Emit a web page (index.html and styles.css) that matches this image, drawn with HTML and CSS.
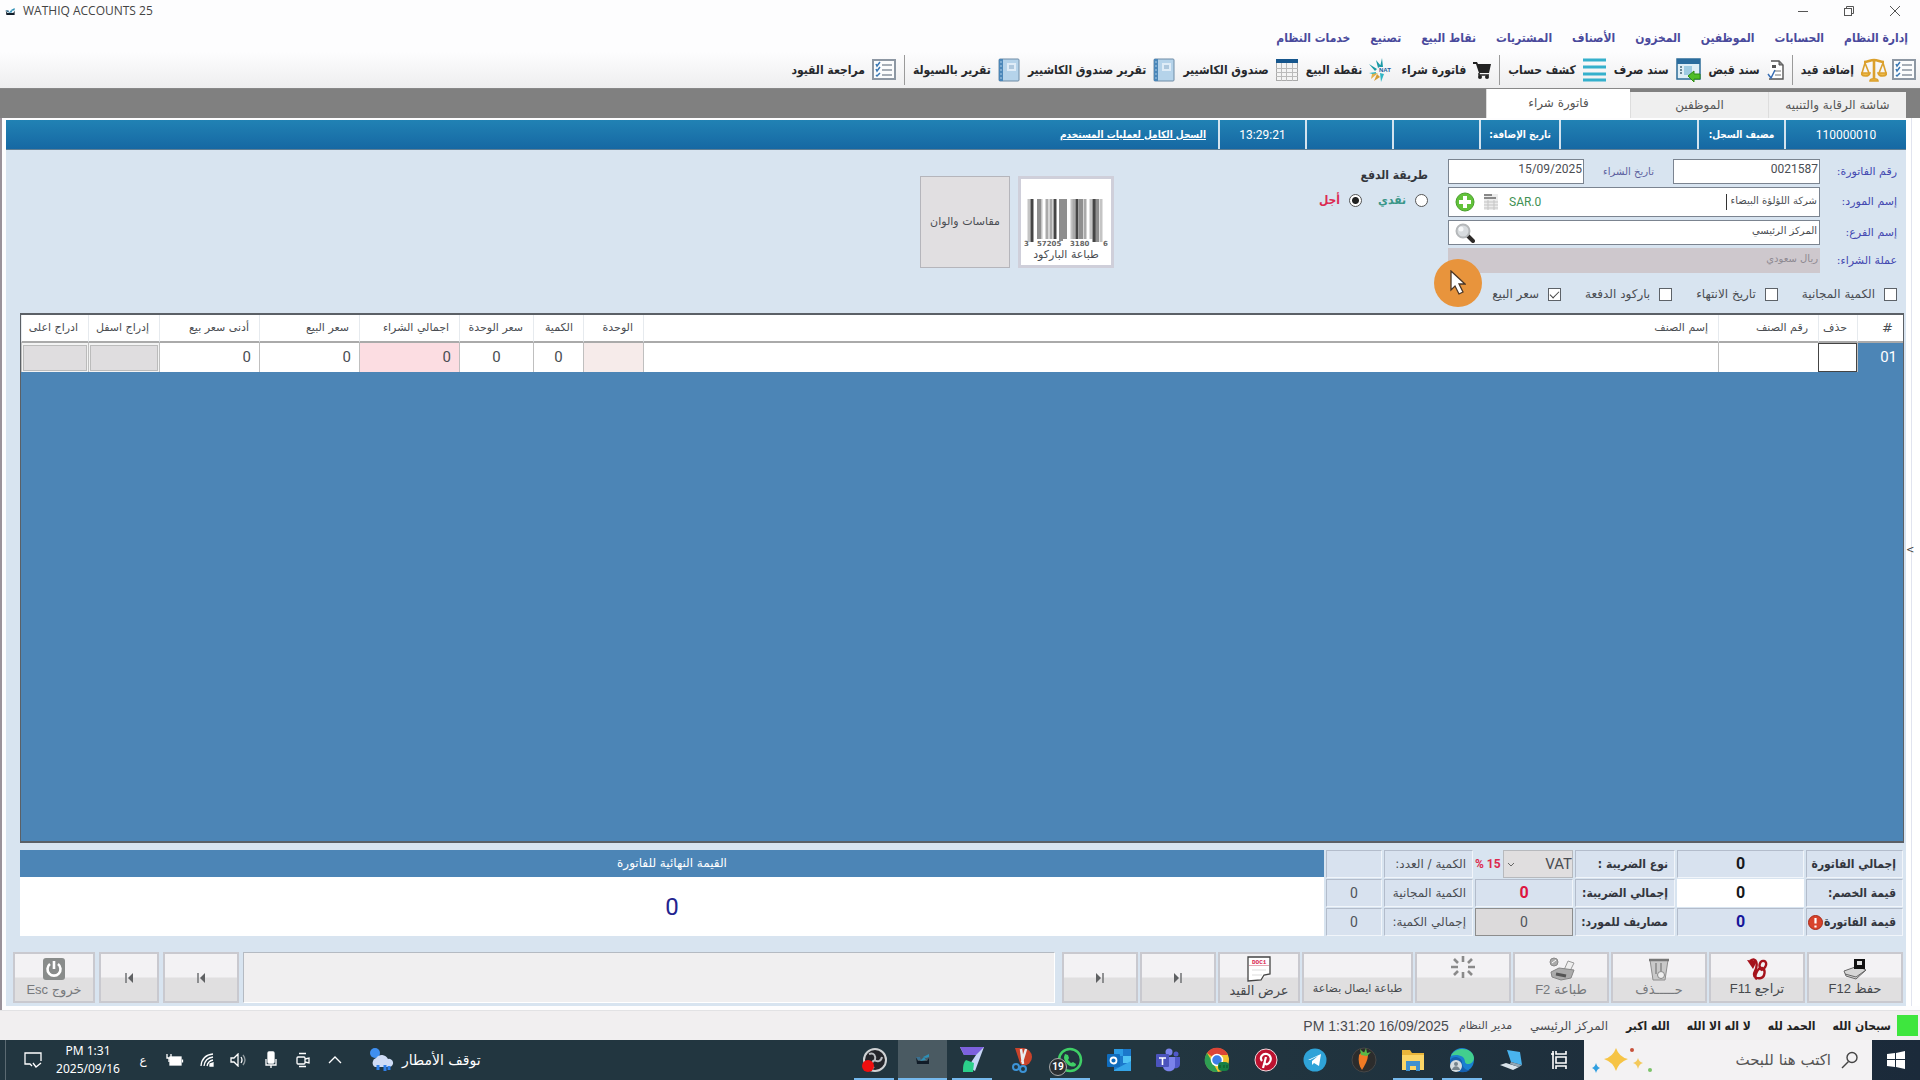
FILE: index.html
```html
<!DOCTYPE html>
<html lang="ar" dir="rtl">
<head>
<meta charset="utf-8">
<title>WATHIQ ACCOUNTS 25</title>
<link rel="stylesheet" href="styles.css">
</head>
<body>
<svg class="defs" width="0" height="0" aria-hidden="true">
  <symbol id="i-list" viewBox="0 0 24 22"><rect x="1" y="1" width="22" height="19" fill="#fbfcfd" stroke="#8d97a3" stroke-width="2"/><path d="M4 5l1 2 3-4M4 10l1 2 3-4M4 16l1 1 3-3" fill="none" stroke="#3b78b4" stroke-width="1.5"/><path d="M10 6h10M10 11h10M10 16h10" stroke="#8a94a0" stroke-width="1.4"/></symbol>
  <symbol id="i-book" viewBox="0 0 22 24"><rect x="1" y="1" width="20" height="22" rx="1" fill="#b5d3ea" stroke="#6f8ca6"/><rect x="1" y="1" width="4" height="22" fill="#4b87b9"/><rect x="9" y="5" width="9" height="8" fill="#dfecf7"/><path d="M11 8h5M11 10h5" stroke="#7fa4c4"/><path d="M2 4h2M2 8h2M2 12h2M2 16h2M2 20h2" stroke="#a9cbe6"/></symbol>
  <symbol id="i-app" viewBox="0 0 16 12"><path d="M1 4l2 4h9l2-3v6H2z" fill="#111c28"/><path d="M5 8l4-4 2 3zM8 4l6-3v3l-3 1z" fill="#2e8fb5"/><path d="M1 4h4l1 3H3z" fill="#3b6f8f"/></symbol>
  <symbol id="i-end" viewBox="0 0 10 12"><path d="M1 1l5 5-5 5z" fill="#5f6163"/><path d="M8 1v10" stroke="#77797b" stroke-width="1.6"/></symbol>
  <symbol id="i-first" viewBox="0 0 10 12"><path d="M9 1L4 6l5 5z" fill="#5f6163"/><path d="M2 1v10" stroke="#77797b" stroke-width="1.6"/></symbol>
</svg>

<header class="titlebar" dir="ltr">
  <svg class="app-icon" width="11" height="9"><use href="#i-app"/></svg>
  <h1>WATHIQ ACCOUNTS 25</h1>
  <div class="window-buttons">
    <button aria-label="تصغير"><svg width="12" height="12"><path d="M1 6.5h10" stroke="#555"/></svg></button>
    <button aria-label="استعادة"><svg width="12" height="12" fill="none" stroke="#555"><rect x="1.5" y="3.5" width="7" height="7"/><path d="M3.500 3.500v-2h7v7h-2"/></svg></button>
    <button aria-label="إغلاق"><svg width="12" height="12"><path d="M1 1l10 10M11 1L1 11" stroke="#555"/></svg></button>
  </div>
</header>

<nav class="menu">
  <a href="#">إدارة النظام</a><a href="#">الحسابات</a><a href="#">الموظفين</a><a href="#">المخزون</a><a href="#">الأصناف</a><a href="#">المشتريات</a><a href="#">نقاط البيع</a><a href="#">تصنيع</a><a href="#">خدمات النظام</a>
</nav>

<div class="toolbar">
  <button class="icon-only" aria-label="القائمة"><svg width="24" height="22"><use href="#i-list"/></svg></button>
  <button><svg width="26" height="26" viewBox="0 0 26 26" fill="none" stroke="#dba02c" stroke-width="1.600"><path d="M13 2v20M3 5c4 0 6-2 10-2s6 2 10 2" stroke-width="2.600"/><path d="M4 6L1 16M4 6l4 10M22 6l-4 10M22 6l3 10"/><path d="M0 16h9c-1 4-8 4-9 0zM17 16h9c-1 4-8 4-9 0zM9 24c0-3 8-3 8 0z" fill="#eebc4c"/></svg>إضافة قيد</button>
  <i class="sep"></i>
  <button><svg width="17" height="20" viewBox="0 0 17 20"><path d="M4 1h8l4 4v14H2" fill="#fff" stroke="#555" stroke-width="1.400"/><path d="M12 1v4h4" fill="#888" stroke="#555"/><path d="M5 5h4v3H5z" fill="#555"/><path d="M1 14l3 4 4-8" fill="none" stroke="#3a6fb5" stroke-width="1.500"/><path d="M8 11h6M8 15h6" stroke="#777"/></svg>سند قبض</button>
  <button><svg width="25" height="24" viewBox="0 0 25 24"><rect x="1" y="1" width="23" height="20" fill="#dfeef6" stroke="#2d6c98" stroke-width="1.500"/><rect x="1" y="1" width="23" height="5" fill="#2a6c9e"/><path d="M4 9h2M4 12h2M4 15h2" stroke="#467" stroke-width="1.500"/><path d="M8 8h8v9H8z" fill="#9ecbe2"/><path d="M12 18l6-5v3h6v5h-6v3z" fill="#4fbd28" stroke="#2f8c14"/></svg>سند صرف</button>
  <button><svg width="23" height="24" viewBox="0 0 23 24"><path d="M0 2h23M0 9h23M0 16h23M0 22h23" stroke="#35b0cc" stroke-width="3"/></svg>كشف حساب</button>
  <i class="sep"></i>
  <button><svg width="18" height="18" viewBox="0 0 18 18"><path d="M0 1h4l1 2h13l-2 9H6L3 3H0z" fill="#222"/><path d="M6 12v2h10" fill="none" stroke="#222" stroke-width="1.500"/><circle cx="7" cy="16" r="2" fill="#222"/><circle cx="14" cy="16" r="2" fill="#222"/></svg>فاتورة شراء</button>
  <button><svg width="24" height="24" viewBox="0 0 24 24"><path d="M9 10L7 2l5 6zM8 11L0 6l6 7zM11 9l2-9 1 9z" fill="#1c9aa6"/><path d="M7 14l-7 1 7 2zM11 15l1 9 3-8z" fill="#2fb6c4"/><path d="M9 15l-7 6 1-5z" fill="#e3b04a"/><path d="M8 16l-3 7 6-4z" fill="#d59c34"/><text x="10" y="14" class="nat">NAT</text></svg>نقطة البيع</button>
  <button><svg width="22" height="22" viewBox="0 0 22 22"><rect x=".5" y=".5" width="21" height="21" fill="#f4f4f4" stroke="#aaa"/><rect width="22" height="4" fill="#16568d"/><path d="M0 9.500h22M0 13.500h22M0 17.500h22M5.500 4v18M10.500 4v18M16.500 4v18" stroke="#bbb"/></svg>صندوق الكاشيير</button>
  <button><svg width="22" height="24"><use href="#i-book"/></svg>تقرير صندوق الكاشيير</button>
  <button><svg width="22" height="24"><use href="#i-book"/></svg>تقرير بالسيولة</button>
  <i class="sep"></i>
  <button><svg width="24" height="22"><use href="#i-list"/></svg>مراجعة القيود</button>
</div>

<div class="tabs">
  <button>شاشة الرقابة والتنبيه</button>
  <button>الموظفين</button>
  <button class="active">فاتورة شراء</button>
</div>

<div class="workspace">
<aside class="rail"><button aria-label="طي">&gt;</button></aside>
<main class="panel">
  <div class="record-bar">
    <span class="w-l num">110000010</span><span class="w-m">مضيف السجل:</span><span class="w-xl"></span><span class="w-s">تاريخ الإضافة:</span><span class="w-m"></span><span class="w-m"></span><span class="w-m num">13:29:21</span>
    <a href="#">السجل الكامل لعمليات المستخدم</a>
  </div>

  <section class="form">
    <div class="details">
      <div class="fields">
        <label for="inv">رقم الفاتورة:</label>
        <div class="pair">
          <input id="inv" class="num" value="0021587">
          <label for="date">تاريخ الشراء</label>
          <input id="date" class="num" value="15/09/2025">
        </div>
        <label for="supplier">إسم المورد:</label>
        <div class="box tall">
          <input id="supplier" value="شركة اللؤلؤة البيضاء"><i class="caret"></i>
          <span class="balance" dir="ltr">SAR.0</span>
          <svg width="16" height="18" viewBox="0 0 16 18"><rect x="1" y="1" width="14" height="16" fill="#ececec"/><path d="M1 2h8M1 5h12" stroke="#888" stroke-width="2"/><path d="M1 9h14M1 12h14M1 15h14M5 7v10M11 7v10" stroke="#c5c5c5"/></svg>
          <svg width="20" height="20" viewBox="0 0 20 20"><circle cx="10" cy="10" r="9" fill="#62c23a" stroke="#49a02c"/><path d="M10 4v12M4 10h12" stroke="#fff" stroke-width="4"/></svg>
        </div>
        <label for="branch">إسم الفرع:</label>
        <div class="box">
          <input id="branch" value="المركز الرئيسي">
          <svg width="20" height="20" viewBox="0 0 20 20"><path d="M12 12l6 6" stroke="#2d2a28" stroke-width="4" stroke-linecap="round"/><circle cx="8" cy="8" r="6.500" fill="#d8dcdf" stroke="#b5b8ba" stroke-width="2"/><circle cx="6" cy="6" r="2.500" fill="#f6f8f9"/></svg>
        </div>
        <label for="currency">عملة الشراء:</label>
        <div class="box off">
          <input id="currency" value="ريال سعودي" disabled>
          <span class="pointer"><svg width="16" height="26" viewBox="0 0 16 26"><path d="M1 1v19l4-4 4 8 4-2-4-8h6z" fill="#fff" stroke="#4b3626" stroke-width="1.300"/></svg></span>
        </div>
      </div>
      <div class="options">
        <label><input type="checkbox">الكمية المجانية</label>
        <label><input type="checkbox">تاريخ الانتهاء</label>
        <label><input type="checkbox">باركود الدفعة</label>
        <label><input type="checkbox" checked>سعر البيع</label>
      </div>
    </div>
    <fieldset class="payment">
      <legend>طريقة الدفع</legend>
      <label class="cash"><input type="radio" name="pay">نقدي</label>
      <label class="credit"><input type="radio" name="pay" checked>أجل</label>
    </fieldset>
    <div class="big-buttons">
      <button class="barcode">
        <svg width="84" height="50" viewBox="0 0 84 50"><path d="M5 2v43M17 2v40M48 2v40M67 2v40M77 2v43" stroke="#c4c4c4" stroke-width="3"/><path d="M15 2v40M41 2v40M57 2v40M37 2v42M73 2v43" stroke="#8f8f8f" stroke-width="4"/><path d="M23 2v40M27 2v40M50 2v40M61 2v40" stroke="#aaa" stroke-width="3"/><path d="M8 2v43M31 2v40M53 2v40M70 2v43" stroke="#454545" stroke-width="3"/><g class="digits"><text x="0" y="49">3</text><text x="13" y="49">57205</text><text x="46" y="49">3180</text><text x="79" y="49">6</text></g></svg>
        طباعة الباركود</button>
      <button class="sizes">مقاسات والوان</button>
    </div>
  </section>

  <div class="grid-area">
    <table>
      <colgroup><col class="c-46"><col class="c-39"><col class="c-100"><col><col class="c-60"><col class="c-50"><col class="c-74"><col class="c-100"><col class="c-100"><col class="c-100"><col class="c-71"><col class="c-67"></colgroup>
      <thead><tr><th class="hash">#</th><th>حذف</th><th>رقم الصنف</th><th>إسم الصنف</th><th>الوحدة</th><th>الكمية</th><th>سعر الوحدة</th><th>اجمالي الشراء</th><th>سعر البيع</th><th>أدنى سعر بيع</th><th>إدراج اسفل</th><th>ادراج اعلى</th></tr></thead>
      <tbody><tr><td class="row-no">01</td><td class="focus"></td><td></td><td></td><td class="unit"></td><td class="mid">0</td><td class="mid">0</td><td class="sum">0</td><td>0</td><td>0</td><td class="ins"><button aria-label="إدراج اسفل"></button></td><td class="ins"><button aria-label="ادراج اعلى"></button></td></tr></tbody>
    </table>
  </div>

  <section class="totals">
    <span class="cell strong">إجمالي الفاتورة</span><output class="cell val">0</output>
    <label class="cell strong" for="vat">نوع الضريبة :</label>
    <div class="tax"><span class="select"><select id="vat"><option>VAT</option></select><svg width="8" height="6"><path d="M1 1l3 3 3-3" fill="none" stroke="#666"/></svg></span><b dir="ltr">% 15</b></div>
    <span class="cell">الكمية / العدد:</span><output class="cell qty"></output>
    <label class="cell strong" for="disc">قيمة الخصم:</label><input id="disc" class="cell val white" value="0">
    <span class="cell strong">إجمالي الضريبة:</span><output class="cell val red">0</output>
    <span class="cell">الكمية المجانية</span><output class="cell qty">0</output>
    <span class="cell strong alert">قيمة الفاتورة<svg width="15" height="15" viewBox="0 0 15 15"><circle cx="7.500" cy="7.500" r="7" fill="#d8432c" stroke="#a92a18"/><path d="M7.500 3v5.500M7.500 10.500v2" stroke="#fff" stroke-width="2.200"/></svg></span><output class="cell val navy">0</output>
    <label class="cell strong" for="exp">مصاريف للمورد:</label><input id="exp" class="cell qty expense" value="0">
    <span class="cell">إجمالي الكمية:</span><output class="cell qty">0</output>
    <div class="final"><h2>القيمة النهائية للفاتورة</h2><output>0</output></div>
  </section>

  <section class="actions">
    <button class="w96"><svg width="26" height="22" viewBox="0 0 26 22"><path d="M2 13l14-5 8 4-10 9-10-3z" fill="#d6d6d6" stroke="#666"/><path d="M3 16l11 3 10-7" fill="none" stroke="#666"/><rect x="12" y="1" width="11" height="10" fill="#111"/><path d="M15 3h5v4h-5z" fill="#e3e3e3"/></svg>حفظ F12</button>
    <button class="w96"><svg width="26" height="22" viewBox="0 0 26 22"><path d="M6 3c7-5 8 4 5 10s2 8 6 7 5-9 1-10-9 9-5 11M17 12c-3-4-1-10 3-9s2 8-3 9" fill="none" stroke="#a5121b" stroke-width="2.400"/><path d="M3 2l10 1-4 8z" fill="#a5121b"/></svg>تراجع F11</button>
    <button class="w96 dim"><svg width="22" height="24" viewBox="0 0 22 24"><path d="M2 3h18l-3 20H5z" fill="#c9c9c9" stroke="#8d8d8d"/><path d="M1 3h20" stroke="#777" stroke-width="2.500"/><path d="M8 6v11M13 6v8" stroke="#999" stroke-width="2"/><circle cx="13" cy="18" r="3.500" fill="#eee" stroke="#888"/></svg>حـــــذف</button>
    <button class="w96 dim"><svg width="30" height="24" viewBox="0 0 30 24"><circle cx="8" cy="5" r="4" fill="#aaa" stroke="#888"/><path d="M6 6l4-3" stroke="#fff"/><path d="M18 13l4-9 6 2-4 8z" fill="#eee" stroke="#999"/><path d="M5 15l8-4 15 2-3 8-10 2-9-3z" fill="#ababab" stroke="#858585"/><path d="M10 17l10 2" stroke="#555" stroke-width="3"/></svg>طباعة F2</button>
    <button class="w96 dim top" aria-label="تحديث"><svg width="26" height="22" viewBox="-13 -11 26 22" stroke="#8a8a8a" stroke-width="2.600"><path d="M0-11v6M0 5v6M-12 0h7M5 0h7M-9-8l4 4M5 4l4 4M9-8L5-4M-5 4l-4 4"/></svg></button>
    <button class="w111 low">طباعة ايصال بضاعة</button>
    <button class="w82"><svg width="24" height="26" viewBox="0 0 24 26"><path d="M1 1h22v17l-6 1-3 5-13 1z" fill="#fff" stroke="#444" stroke-width="1.300"/><text x="5" y="8" class="doc">DOC1</text><path d="M2 9.500h20" stroke="#e4a8b4"/><path d="M5 14h14M5 19h10" stroke="#ddd"/></svg>عرض القيد</button>
    <button class="w76" aria-label="التالي"><svg width="10" height="12"><use href="#i-end"/></svg></button>
    <button class="w76" aria-label="الأخير"><svg width="10" height="12"><use href="#i-end"/></svg></button>
    <div class="message"></div>
    <button class="w76" aria-label="السابق"><svg width="10" height="12"><use href="#i-first"/></svg></button>
    <button class="w60" aria-label="الأول"><svg width="10" height="12"><use href="#i-first"/></svg></button>
    <button class="w82 dim"><svg width="24" height="24" viewBox="0 0 24 24"><rect x="1" y="1" width="22" height="22" rx="3" fill="#898c8b"/><path d="M8 7a6.500 6.500 0 1 0 8 0M12 4v8" fill="none" stroke="#fff" stroke-width="2.600"/></svg>خروج Esc</button>
  </section>
</main>
</div>

<footer class="status">
  <i class="led"></i><b>سبحان الله</b><b>الحمد لله</b><b>لا اله الا الله</b><b>الله اكبر</b><span>المركز الرئيسي</span><span class="user">مدير النظام</span><time dir="ltr">PM 1:31:20 16/09/2025</time>
</footer>

<div class="taskbar">
  <button class="start" aria-label="ابدأ"><svg width="18" height="18" fill="#fff"><path d="M0 3l8-1v6H0zM9 2l9-2v8H9zM0 9h8v7l-8-1zM9 9h9v9l-9-2z"/></svg></button>
  <div class="search">
    <svg width="18" height="18" fill="none" stroke="#444" stroke-width="1.400"><circle cx="11" cy="6.500" r="5"/><path d="M7.500 10.500L1 17"/></svg>
    <input aria-label="بحث" placeholder="اكتب هنا للبحث">
    <svg width="62" height="26" viewBox="0 0 62 26"><path d="M24 1q3 9 12 11-9 3-12 12-3-9-12-12 9-2 12-11z" fill="#f6c445"/><path d="M46 11q1 4 5 5-4 1-5 6-1-5-5-6 4-1 5-5z" fill="#f3c95b"/><path d="M4 16q1 4 4 5-3 1-4 5-1-4-4-5 3-1 4-5z" fill="#2f9fe0"/><circle cx="40" cy="3" r="2" fill="#c8523c"/><circle cx="58" cy="23" r="2" fill="#7cc46a"/></svg>
  </div>
  <nav class="apps">
    <button aria-label="عرض المهام"><svg width="20" height="20" fill="none" stroke="#fff" stroke-width="1.600"><path d="M3 1v18M6 3V1M16 1v3H6V1M16 19v-3H6v3M6 7h10v6H6zM1 4h3"/></svg></button>
    <button aria-label="الكمبيوتر"><svg width="26" height="24" viewBox="0 0 26 24"><path d="M9 2l13 2 2 13-11-3z" fill="#49b3ee"/><path d="M2 17l6-2 13 4-6 3z" fill="#d9e3ea"/><path d="M13 14l11 3-3 2-9-3z" fill="#92a7b5"/></svg></button>
    <button class="open" aria-label="Edge"><svg width="26" height="26" viewBox="0 0 26 26"><circle cx="13" cy="13" r="12" fill="#1a7fd0"/><path d="M2 9c4-10 22-9 23 2 0 6-8 8-9 4 0-7-9-8-14-6z" fill="#42cf8e"/><path d="M1 13c4-6 12-2 12 2s3 9 8 8C12 29 1 22 1 13z" fill="#1560b0"/><circle cx="7" cy="19" r="6" fill="#d5dce0"/><circle cx="7" cy="17" r="2" fill="#76838c"/><path d="M3 23c1-5 7-5 8 0z" fill="#76838c"/></svg></button>
    <button class="open" aria-label="الملفات"><svg width="24" height="22" viewBox="0 0 24 22"><path d="M1 1h8l2 3h12v17H1z" fill="#e9b53a"/><path d="M1 6h22v15H1z" fill="#fbd566"/><path d="M5 12h14v10h-4v-5H9v5H5z" fill="#3f90cf"/></svg></button>
    <button aria-label="FL Studio"><svg width="26" height="26" viewBox="0 0 26 26"><circle cx="13" cy="13" r="12" fill="#2c2c2c" stroke="#464646"/><path d="M8 8c3-4 8-3 9 0 0 5-3 10-6 15-3-4-4-9-3-15z" fill="#f07a24"/><path d="M10 8L9 2l4 4 2-5 1 5 4-1-4 4z" fill="#57b947"/></svg></button>
    <button aria-label="Telegram"><svg width="24" height="24" viewBox="0 0 24 24"><circle cx="12" cy="12" r="11.500" fill="#2fa3d8"/><path d="M5 12l13-6-2 12-5-3-2 2v-4l6-5-8 4z" fill="#fff"/></svg></button>
    <button aria-label="Pinterest"><svg width="24" height="24" viewBox="0 0 24 24"><circle cx="12" cy="12" r="11" fill="#bd1230" stroke="#f3d9dd"/><path d="M9 20l3-11M8 13c-3-4 1-8 5-7s5 6 2 9-5 0-4-2" fill="none" stroke="#fff" stroke-width="2.200"/></svg></button>
    <button aria-label="Chrome"><svg width="26" height="26" viewBox="0 0 26 26"><circle cx="13" cy="13" r="12" fill="#f3c32f"/><path d="M13 13L3 6a12 12 0 0 1 21 2H13z" fill="#dc4437"/><path d="M3 6l6 10 5 9A12 12 0 0 1 3 6z" fill="#2e9e52"/><circle cx="13" cy="13" r="5.500" fill="#3c7ee8" stroke="#fff" stroke-width="1.500"/><rect x="14" y="15" width="11" height="9" rx="4" fill="#167f43"/><path d="M16 21v-3M20 21v-3M23 21v-3" stroke="#0a5428"/></svg></button>
    <button aria-label="Teams"><svg width="26" height="24" viewBox="0 0 26 24"><circle cx="14" cy="4" r="3.500" fill="#7b83eb"/><circle cx="21" cy="6" r="2.500" fill="#5059c9"/><path d="M17 9h8v7c0 4-4 5-6 4z" fill="#5059c9"/><path d="M8 9h12v9c0 7-12 7-12 0z" fill="#7b83eb"/><rect x="1" y="6" width="13" height="13" rx="1" fill="#4b53bc"/><path d="M4 10h7M7.500 10v7" stroke="#fff" stroke-width="1.600"/></svg></button>
    <button aria-label="Outlook"><svg width="26" height="24" viewBox="0 0 26 24"><rect x="8" y="1" width="17" height="21" fill="#1b78cb"/><path d="M8 1h9v7H8z" fill="#2b9be4"/><path d="M17 8h8v7h-8z" fill="#50c3f4"/><path d="M8 22l17-9v10H8z" fill="#35a5e8"/><rect x="1" y="6" width="13" height="13" rx="1" fill="#0f6cbd"/><circle cx="7.500" cy="12.500" r="3" fill="none" stroke="#fff" stroke-width="1.800"/></svg></button>
    <button class="open" aria-label="WhatsApp"><svg width="26" height="26" viewBox="0 0 26 26"><circle cx="13" cy="13" r="11" fill="#22343f" stroke="#3fcf66" stroke-width="2.500"/><path d="M8 7l3 1 1 3-1 2 3 3 2-1 3 2c0 3-3 3-6 2-4-2-6-6-6-9z" fill="#3fcf66"/></svg><span class="badge">19</span></button>
    <button aria-label="أداة القص"><svg width="22" height="26" viewBox="0 0 22 26"><path d="M5 1h8a9 9 0 0 1 0 18l-3-3z" fill="#c9432b"/><path d="M11 2l2 15M12 15l4-13" stroke="#e9edf0" stroke-width="2.500"/><circle cx="6" cy="20" r="3" fill="none" stroke="#3c93d6" stroke-width="2"/><circle cx="13" cy="22" r="3" fill="none" stroke="#3c93d6" stroke-width="2"/></svg></button>
    <button class="open" aria-label="المحرر"><svg width="26" height="28" viewBox="0 0 26 28"><path d="M1 1h24l-9 24-7-4 8-12H5z" fill="#c7d5f7"/><path d="M1 1h16l8 0-8 8H5z" fill="#7d61de"/><path d="M7 14l8 3-1 9H4c0-5 0-9 3-12z" fill="#2bcf8a"/></svg></button>
    <button class="open current" aria-label="WATHIQ"><svg width="16" height="12"><use href="#i-app"/></svg></button>
    <button class="open" aria-label="OBS"><svg width="26" height="26" viewBox="0 0 26 26"><circle cx="14" cy="13" r="11" fill="#24252a" stroke="#cfd2d4" stroke-width="2"/><path d="M8 7c5-2 7 2 6 6M21 10c-1 5-5 5-8 3M13 21c-4-3-2-7 1-8" fill="none" stroke="#b9bcc0" stroke-width="2"/><circle cx="7" cy="19" r="6" fill="#ef0f0f"/></svg></button>
  </nav>
  <div class="weather">توقف الأمطار<svg width="26" height="24" viewBox="0 0 26 24"><circle cx="6" cy="5" r="5" fill="#3f8ff0"/><path d="M6 19a5 5 0 0 1 1-9 7 7 0 0 1 12 1 4 4 0 0 1 2 8z" fill="#cfdcf6"/><path d="M9 17v5M16 17v6M20 18v4" stroke="#2f7fe8" stroke-width="3"/></svg></div>
  <div class="tray">
    <button aria-label="المزيد"><svg width="14" height="14"><path d="M1 10l6-6 6 6"/></svg></button>
    <button aria-label="الكاميرا"><svg width="14" height="16"><rect x="1" y="5" width="8" height="7" rx="1"/><path d="M9 7l4-1v5l-4-1M3 1.500h7M3 14.500h7"/></svg></button>
    <button aria-label="الميكروفون"><svg width="14" height="18"><rect x="4" y="1" width="6" height="11" rx="1" fill="#fff"/><path d="M2 8v6h10V8M7 14v3"/></svg></button>
    <button aria-label="الصوت"><svg width="18" height="14"><path d="M1 5h3l4-4v12L4 9H1zM11 4q2 3 0 6"/><path d="M13 2q4 5 0 10" opacity=".5"/></svg></button>
    <button aria-label="الشبكة"><svg width="14" height="14"><path d="M1 13Q2 2 13 1M4 13q1-8 9-9M7 13q1-5 6-6"/><path d="M10 13v-2l3-1v3z" fill="#fff"/></svg></button>
    <button aria-label="البطارية"><svg width="18" height="14"><rect x="4" y="4" width="11" height="8" fill="#fff"/><path d="M16.500 6.500v3M1 1v4h4V1M3 5v4"/></svg></button>
    <button>ع</button>
    <div class="clock"><span dir="ltr">PM 1:31</span><span dir="ltr">2025/09/16</span></div>
    <button aria-label="الإشعارات"><svg width="18" height="18"><path d="M8 15l-2-2H1V2h16v8"/><path d="M9 12l3 4 5-4"/></svg></button>
  </div>
</div>
</body>
</html>
```
FILE: styles.css
```css
* { box-sizing: border-box; }
body {
  margin: 0;
  min-height: 100vh;
  display: flex;
  flex-direction: column;
  background: #fdfdfe;
  color: #4a4d52;
  font: 12px/16px "DejaVu Sans", sans-serif;
}
button, input, select { font: inherit; color: inherit; margin: 0; }
button { background: none; border: 0; padding: 0; }
a { text-decoration: none; }
.defs { position: absolute; }
.num { font-family: Roboto, sans-serif; }

/* Window frame */
.titlebar { display: flex; align-items: center; height: 24px; padding: 0 2px 2px 5px; gap: 7px; }
.titlebar h1 { flex: 1; margin: 0; font: 12px/16px "Open Sans", sans-serif; color: #444; }
.window-buttons { display: flex; }
.window-buttons button { width: 46px; height: 20px; }
.window-buttons svg { display: block; margin: auto; }

.menu { display: flex; gap: 20px; height: 28px; padding-inline-start: 12px; align-items: center; }
.menu a { color: #4a4a9c; font-family: "DejaVu Sans Condensed", "DejaVu Sans", sans-serif; font-weight: bold; }

.toolbar {
  display: flex;
  align-items: center;
  height: 37px;
  gap: 8px;
  padding-inline-start: 4px;
  background: linear-gradient(#fdfdfe, #eeeeef);
  border-bottom: 1px solid #888;
}
.toolbar button {
  display: flex;
  align-items: center;
  gap: 7px;
  height: 32px;
  color: #26282c;
  font-family: "DejaVu Sans Condensed", "DejaVu Sans", sans-serif;
  font-weight: bold;
  white-space: nowrap;
}
.toolbar .icon-only { margin-inline-end: -3px; }
.sep { width: 1px; height: 30px; background: #9a9a9a; }
.nat { font: bold 6px "Liberation Sans", sans-serif; fill: #1c5c9a; direction: ltr; }

.tabs { display: flex; align-items: flex-end; height: 29px; padding-inline-start: 14px; background: #808080; }
.tabs button { width: 138px; height: 26px; background: #efefef; border-left: 1px solid #ddd; color: #555; }
.tabs .active { width: 144px; height: 29px; background: #fff; padding-bottom: 2px; }

.workspace { flex: 1; display: flex; border-left: 2px solid #9a929a; }
.panel { flex: 1; min-width: 0; display: flex; flex-direction: column; margin: 2px 0 4px 4px; background: #d8e4f0; }
.rail { width: 14px; display: flex; align-items: center; justify-content: flex-end; background: linear-gradient(90deg, #fff 5px, #e1e4ef 5px 6px, #fff 6px); margin-bottom: 4px; }
.rail button { color: #444; font-size: 10px; padding-bottom: 24px; }

.record-bar { display: flex; height: 30px; background: linear-gradient(#2182b4, #1668a3); color: #fff; border-bottom: 1px solid #5f7f95; }
.record-bar span { border-left: 2px solid #d3e3ef; display: flex; align-items: center; justify-content: center; }
.record-bar span, .record-bar a { font-family: "DejaVu Sans Condensed", "DejaVu Sans", sans-serif; font-size: 10px; font-weight: bold; }
.record-bar .num { font: 12px/16px Roboto, sans-serif; }
.record-bar a { color: #fff; text-decoration: underline; align-self: center; margin-inline-start: 12px; }
.record-bar .w-s { width: 80px; }
.record-bar .w-m { width: 87px; }
.record-bar .w-l { width: 122px; }
.record-bar .w-xl { width: 138px; }

/* Invoice form */
.form { display: flex; height: 163px; padding: 9px 9px 0; align-items: flex-start; }
.fields { display: grid; grid-template-columns: 77px 372px; row-gap: 3px; align-items: center; font-size: 11px; }
.fields > label, .pair label { color: #4348b0; }
.pair { display: flex; justify-content: space-between; align-items: center; }
.pair label { font-size: 10px; color: #5c609e; }
.pair input { width: 147px; height: 25px; border: 1px solid #7b8490; background: #fff; padding: 0 1px 5px; font-size: 12px; text-align: right; direction: ltr; }
.pair #date { width: 136px; }
.box { display: flex; align-items: center; height: 25px; gap: 8px; padding: 0 2px 0 6px; background: #fff; border: 1px solid #7b8490; position: relative; }
.box.tall { height: 30px; }
.box input { flex: 1; min-width: 0; border: 0; padding: 0 0 3px; background: none; font-size: 10px; }
.box.tall input { flex: none; width: 90px; }
.caret { width: 1px; height: 16px; background: #333; margin-inline-start: -8px; margin-inline-end: auto; }
.box.off { background: #cec8cd; border: 0; }
.box.off input { color: #8e8a92; }
.balance { font: 12px/16px Roboto, sans-serif; color: #3f9153; padding-right: 8px; margin-left: 2px; }
.pointer { position: absolute; left: -14px; top: 11px; width: 48px; height: 48px; border-radius: 50%; background: #e8943c; display: flex; align-items: center; justify-content: center; }
.options { display: flex; gap: 24px; padding-top: 13px; }
.options label { display: flex; align-items: center; gap: 9px; white-space: nowrap; }
.options input { width: 13px; height: 13px; appearance: none; border: 1px solid #5d6268; background: #fff; }
.options input:checked { display: grid; place-items: center; }
.options input:checked::after { content: ""; width: 4px; height: 8px; margin-bottom: 2px; border: solid #444; border-width: 0 1px 1px 0; rotate: 45deg; }

.payment { border: 0; margin: 0; padding: 0; margin-inline-start: 20px; width: 122px; display: flex; gap: 16px; font: bold 12px/16px "DejaVu Sans Condensed", "DejaVu Sans", sans-serif; }
.payment legend { padding: 8px 0 9px; color: #33363c; }
.payment label { display: flex; align-items: center; gap: 9px; font-size: 12px; }
.payment input { appearance: none; width: 13px; height: 13px; border: 1px solid #555; border-radius: 50%; background: #fff; }
.payment input:checked { background: radial-gradient(#222 0 3px, #fff 4px); }
.cash { color: #3a9688; }
.credit { color: #dc2a52; }

.big-buttons { display: flex; gap: 8px; margin-inline-start: 192px; padding-top: 17px; }
.big-buttons button { width: 90px; height: 92px; border: 1px solid #b5b5bb; background: #e1dfe1; white-space: nowrap; font-size: 11px; }
.big-buttons .barcode { width: 96px; border: 3px solid #cfcfda; background: #fff; display: flex; flex-direction: column; align-items: center; justify-content: flex-end; padding-bottom: 2px; }
.digits { font: bold 7px "DejaVu Sans", sans-serif; fill: #666; direction: ltr; }

/* Items table */
.grid-area { flex: 1; margin: 0 2px 0 14px; background: #4c85b6; border: solid #5b6066; border-width: 2px 1px; }
table { width: 100%; border-collapse: separate; border-spacing: 0; table-layout: fixed; background: #fff; }
.c-39 { width: 39px; } .c-46 { width: 46px; } .c-50 { width: 50px; } .c-60 { width: 60px; }
.c-67 { width: 67px; } .c-71 { width: 71px; } .c-74 { width: 74px; } .c-100 { width: 100px; }
th { height: 28px; padding: 0 10px; text-align: right; font-size: 11px; font-weight: normal; border-left: 1px solid #e6eaee; border-bottom: 2px solid #aaa; white-space: nowrap; }
th.hash { font-size: 13px; }
td { height: 29px; padding: 0 8px 2px; text-align: right; font-family: Roboto, sans-serif; font-size: 15px; border-left: 1px solid #bfbfbf; }
td.mid { text-align: center; }
td.row-no { background: #4c85b6; color: #fff; padding: 0 6px 2px; }
td.focus { border: 1px solid #444; }
td.unit { background: #f6ebea; }
td.sum { background: #fcdde2; }
td.ins { padding: 1px; background: #f3f3f3; }
.ins button { display: block; width: 100%; height: 26px; background: #dfdddf; border: 1px solid #bbb; }

/* Totals */
.totals {
  display: grid;
  grid-template: repeat(3, 28px) / 97px 127px 100px 98px 89px 56px 1fr;
  gap: 1px 2px;
  margin: 7px 3px 0 14px;
}
.cell { display: flex; align-items: center; min-width: 0; padding: 0 6px; border: 1px solid #b3bccb; border-right-color: #f1f5fa; border-bottom-color: #f1f5fa; background: #d8e2ef; white-space: nowrap; }
.strong { font-family: "DejaVu Sans Condensed", "DejaVu Sans", sans-serif; font-weight: bold; color: #33363e; }
.alert { justify-content: space-between; padding-left: 1px; }
.val, .qty { justify-content: center; text-align: center; font: bold 16px/20px Roboto, sans-serif; color: #16181c; }
.qty { font-weight: normal; font-size: 14px; color: #50545a; }
.white { background: #fff; border-color: #fff; }
.red { color: #dd1440; }
.navy { color: #15159a; }
.expense { background: #dcdadb; border-color: #8d8d8d; }
.tax { display: flex; justify-content: space-between; align-items: center; }
.tax b { font: bold 12px/16px Roboto, sans-serif; color: #dc2a4e; }
.select { position: relative; height: 28px; }
.select select { width: 70px; height: 28px; appearance: none; border: 1px solid #b7b9bd; background: #e0dedf; padding: 0; font: 15px/20px Roboto, sans-serif; }
.select svg { position: absolute; left: 4px; top: 12px; }
.final { grid-area: 1 / 7 / 4 / 8; display: flex; flex-direction: column; background: #fff; }
.final h2 { margin: 0; height: 27px; background: #4c85b6; color: #fff; font-size: 12px; line-height: 27px; font-weight: normal; text-align: center; }
.final output { flex: 1; display: flex; align-items: center; justify-content: center; color: #23238f; font: 24px/28px Roboto, sans-serif; }

/* Action buttons */
.actions { display: flex; gap: 2px; margin-top: 16px; padding: 0 3px 3px 7px; height: 54px; }
.actions button { display: flex; flex-direction: column; align-items: center; justify-content: center; border: 2px solid #c9c9cf; background: linear-gradient(#f3f2f4 48%, #e0dfe0 52%); color: #46494d; font: 13px/18px "Liberation Sans", "DejaVu Sans", sans-serif; white-space: nowrap; }
.actions .dim { color: #77797c; }
.actions .top { justify-content: flex-start; padding-top: 2px; }
.actions .low { justify-content: flex-end; padding-bottom: 4px; font-size: 11px; }
.w60 { width: 60px; } .w76 { width: 76px; } .w82 { width: 82px; } .w96 { width: 96px; } .w111 { width: 111px; }
.message { flex: 1; margin-inline-start: 5px; background: #f0eff0; border: 1px solid #b4bac2; border-right-color: #fff; border-bottom-color: #fff; }
.message ~ button { margin-inline-start: 2px; }
.doc { font: bold 6px "Liberation Mono", monospace; fill: #d92350; direction: ltr; }

/* Status bar */
.status { display: flex; align-items: center; gap: 18px; height: 30px; padding-inline-start: 2px; background: #f1eff0; border-top: 1px solid #e2e2e4; color: #4a4c50; }
.led { width: 21px; height: 21px; background: #3ee63e; margin-inline-end: -12px; }
.status b { color: #222; font-family: "DejaVu Sans Condensed", "DejaVu Sans", sans-serif; }
.status b + b { margin-inline-start: -1px; }
.status .user { font-size: 11px; }
.status time { margin-right: -8px; font: 14px/18px "Liberation Sans", sans-serif; }

/* Taskbar */
.taskbar { display: flex; height: 40px; background: linear-gradient(90deg, #223640 60%, #1b2a3a); color: #fff; }
.taskbar button { display: grid; place-items: center; }
.start { width: 48px; }
.search { display: flex; align-items: center; width: 288px; background: #f3f2f3; padding: 0 13px 0 8px; gap: 10px; }
.search input { flex: 1; min-width: 0; border: 0; background: none; padding: 0; font-size: 15px; }
.search input::placeholder { color: #555; opacity: 1; }
.apps { display: flex; }
.apps button { width: 49px; position: relative; }
.apps .open { background: linear-gradient(#76b9ed, #76b9ed) center bottom / 40px 2px no-repeat; }
.apps .current { background: #4a5a62; border-bottom: 2px solid #76b9ed; }
.badge { position: absolute; left: 4px; bottom: 4px; width: 18px; height: 18px; border-radius: 50%; background: #2b2f33; border: 1px solid #aaa; font: bold 10px/16px Roboto, sans-serif; }
.weather { display: flex; align-items: center; gap: 7px; margin-inline-start: auto; margin-inline-end: 18px; font-size: 14px; white-space: nowrap; }
.tray { display: flex; align-items: center; margin-left: 5px; padding-left: 11px; border-left: 1px solid #5b6a72; }
.tray button { width: 32px; height: 40px; }
.tray svg { fill: none; stroke: #fff; stroke-width: 1.3; }
.clock { width: 78px; display: flex; flex-direction: column; align-items: center; font: 12px/18px "Noto Sans", sans-serif; }
```
